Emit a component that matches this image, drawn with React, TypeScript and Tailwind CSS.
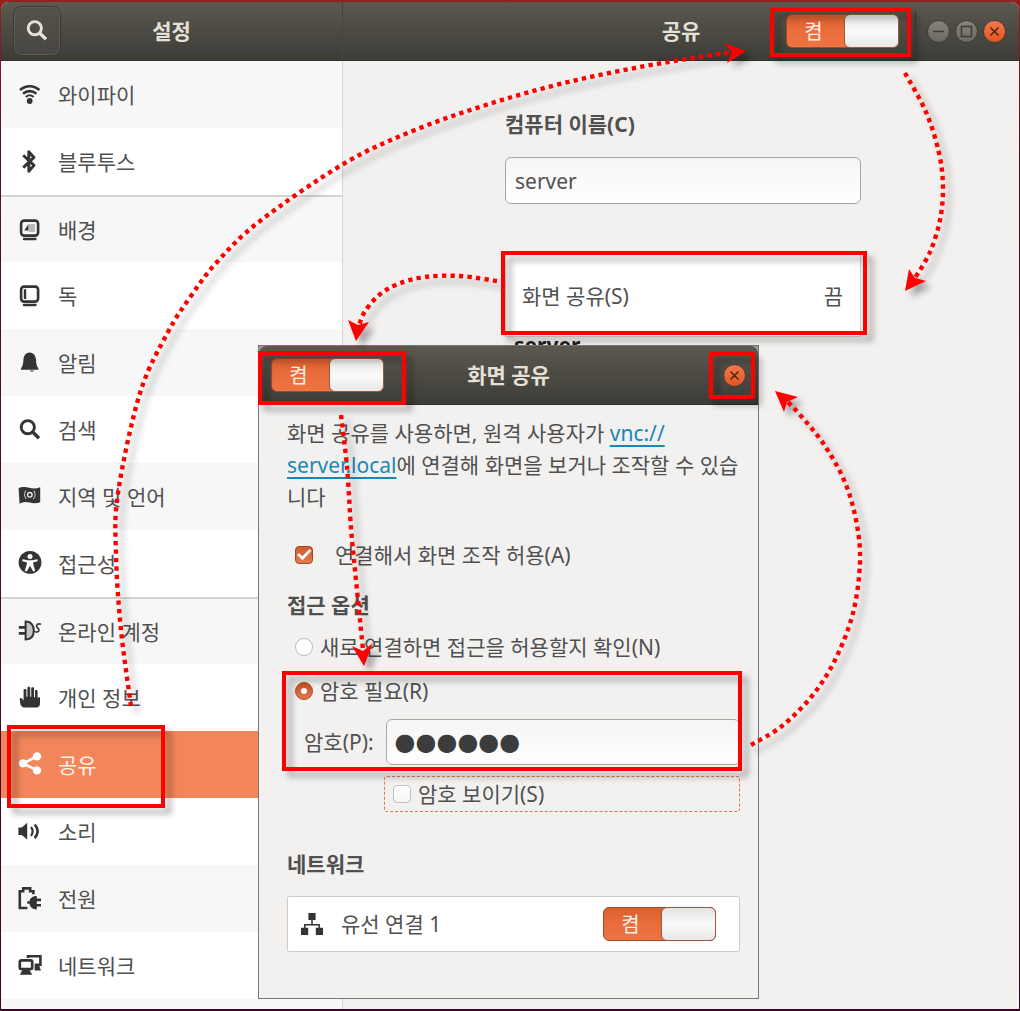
import React, { useState } from "react";

type Point = [number, number];

/* ---------- icons (22 x 22 grid) ---------- */

function Icon({ children, className = "" }: { children: React.ReactNode; className?: string }) {
  return (
    <svg
      viewBox="0 0 22 22"
      className={`size-[22px] shrink-0 overflow-visible ${className}`}
      fill="none"
      stroke="none"
      aria-hidden="true"
    >
      {children}
    </svg>
  );
}

const WifiIcon = (
  <Icon>
    <circle cx="10.7" cy="17" r="2.9" fill="currentColor" />
    <g stroke="currentColor" strokeWidth="2.6">
      <path d="M1 6C6.8 .9 14.6 .9 20.4 6" />
      <path d="M4 9.7C8 6.2 13.4 6.2 17.4 9.7" />
      <path d="M6.8 13C9.2 10.9 12.2 10.9 14.6 13" strokeWidth="2" />
    </g>
  </Icon>
);

const BluetoothIcon = (
  <Icon>
    <path d="M4.2 4.2L15 14.4L9.8 20.2V.8L15 6.4L4.2 16.6" stroke="currentColor" strokeWidth="2.9" strokeLinejoin="round" />
  </Icon>
);

const BackgroundIcon = (
  <Icon>
    <rect x="2.1" y="1.6" width="17" height="15" rx="3" stroke="currentColor" strokeWidth="2.6" />
    <path d="M5 20H16.4" stroke="currentColor" strokeWidth="2.4" strokeLinecap="round" />
    <rect x="9.5" y="5" width="6.5" height="8" fill="#b9b9b9" />
    <path d="M5.2 11.4L9.4 5.2V11.4Z" fill="currentColor" />
  </Icon>
);

const DockIcon = (
  <Icon>
    <rect x="2.1" y="1.6" width="17" height="15" rx="3" stroke="currentColor" strokeWidth="2.6" />
    <path d="M5 20H16.4" stroke="currentColor" strokeWidth="2.4" strokeLinecap="round" />
    <path d="M6 4.2V14" stroke="currentColor" strokeWidth="2.4" />
  </Icon>
);

const BellIcon = (
  <Icon>
    <path
      d="M10.7 .4C6.4 .4 4.6 4.2 4.4 7.8C4.2 12.2 3.6 14.4 2 16.2V17.8H19.4V16.2C17.8 14.4 17.2 12.2 17 7.8C16.8 4.2 15 .4 10.7 .4Z"
      fill="currentColor"
    />
    <path d="M10.8 18.6H15C14.6 20 11.4 20 10.8 18.6Z" fill="currentColor" />
  </Icon>
);

const SearchIcon = (
  <Icon>
    <circle cx="8.8" cy="8.2" r="6.6" stroke="currentColor" strokeWidth="2.9" />
    <path d="M13.4 12.8L20 19.2" stroke="currentColor" strokeWidth="3.4" />
  </Icon>
);

const FlagIcon = (
  <Icon>
    <path d="M-.4 2.2C4 .2 7.6 1.2 11 2C14.6 2.8 18 2.4 21.2 1.2V16.2C17.4 17.8 13.6 17.4 10.4 16.6C6.8 15.8 4 15.8.6 17.8Z" fill="currentColor" />
    <circle cx="10.8" cy="8.8" r="2.3" stroke="#e8e8e8" strokeWidth="1.4" />
    <path d="M6.8 4.7C4.8 7.3 5 10.9 7.4 13M14.8 4.7C16.8 7.3 16.6 10.9 14.2 13" stroke="#bdbdbd" strokeWidth="1.1" />
  </Icon>
);

const AccessIcon = (
  <Icon>
    <circle cx="11" cy="9.4" r="11.4" fill="currentColor" />
    <circle cx="11" cy="3.4" r="2.5" fill="#fff" />
    <path d="M3.4 6.2L9 7.2H13L18.6 6.2V8.2L14 9.6L14.4 11.8L16.2 17.8L14.2 18.4L11 12.8L7.8 18.4L5.8 17.8L7.6 11.8L8 9.6L3.4 8.2Z" fill="#fff" />
  </Icon>
);

const AccountsIcon = (
  <Icon>
    <path d="M-.2 6.4H6M-.2 12.4H6" stroke="currentColor" strokeWidth="2.6" />
    <path d="M6.6 .6V18.4C12.6 18.4 14.8 14.2 14.8 9.5C14.8 4.8 12.6 .6 6.6 .6Z" fill="#c4c4c4" stroke="currentColor" strokeWidth="2" />
    <path d="M15 10.4C18 11.8 20.8 10.4 19.8 8.4C18.8 6.6 17 6 17.6 4.2C18.2 2.8 20.4 2.8 22 3.2" stroke="currentColor" strokeWidth="1.6" />
  </Icon>
);

const HandIcon = (
  <Icon>
    <path
      d="M.8 12.2C.8 10.6 2.6 10.6 3.2 11.8L4.6 13.6V3C4.6 1.6 7.4 1.6 7.4 3V9.8H8.4V1C8.4-.6 11.2-.6 11.2 1V9.8H12.2V1.4C12.2 0 15 0 15 1.4V10.2H16V4C16 2.6 18.6 2.6 18.6 4V10.4L21 10.2V16.2C21 19.2 19.4 20.6 16.6 20.6H6.6C3.6 20.6 1.6 19 1.2 16.4Z"
      fill="currentColor"
    />
  </Icon>
);

const ShareIcon = (
  <Icon>
    <path d="M18 2.4L4 9.4L18 16.4" stroke="currentColor" strokeWidth="2.6" />
    <circle cx="18" cy="2.4" r="4.2" fill="currentColor" />
    <circle cx="4" cy="9.4" r="4.2" fill="currentColor" />
    <circle cx="18" cy="16.4" r="4.2" fill="currentColor" />
  </Icon>
);

const SoundIcon = (
  <Icon>
    <path d="M-.6 6.4H2.8L8.2 1.8V18.6L2.8 14H-.6Z" fill="currentColor" />
    <path d="M12 6C14 8.6 14 12.2 12 14.8" stroke="currentColor" strokeWidth="2.2" />
    <path d="M15.6 3.6C19.6 7.4 19.6 13 15.6 17" stroke="currentColor" strokeWidth="2.6" />
  </Icon>
);

const PowerIcon = (
  <Icon>
    <path d="M8.4 20H.8V3.2H4.2V.4H11.2V3.2H14.4V6.2" stroke="currentColor" strokeWidth="2.6" />
    <path d="M8.2 13.2H10.6C11 10.2 13.4 8 17.8 8V10.6H22V13.2H17.8V16H22V18.6H17.8V21.4C13.4 21.4 11 19.2 10.6 15.8H8.2Z" fill="currentColor" />
  </Icon>
);

const NetworkIcon = (
  <Icon>
    <rect x=".8" y="5.4" width="12.4" height="8.6" rx="1.6" stroke="currentColor" strokeWidth="2.7" />
    <path d="M3.6 14.6H10.4L13.2 19.8H.8Z" fill="currentColor" />
    <path d="M9 3V1.2H21.4V9.8H16" stroke="currentColor" strokeWidth="2.6" />
    <path d="M15.6 9H19.6L22 15.4H15.6Z" fill="currentColor" />
  </Icon>
);

const WiredIcon = (
  <Icon>
    <path d="M11 6V12M3.8 16V11.8H18.2V16" stroke="currentColor" strokeWidth="1.5" />
    <path d="M7.4 0H14.6V7H7.4ZM0 14.8H7.2V22H0ZM14.8 14.8H22V22H14.8Z" fill="currentColor" />
  </Icon>
);

/* ---------- sidebar data ---------- */

const groups: { label: string; icon: React.ReactNode }[][] = [
  [
    { label: "와이파이", icon: WifiIcon },
    { label: "블루투스", icon: BluetoothIcon },
  ],
  [
    { label: "배경", icon: BackgroundIcon },
    { label: "독", icon: DockIcon },
    { label: "알림", icon: BellIcon },
    { label: "검색", icon: SearchIcon },
    { label: "지역 및 언어", icon: FlagIcon },
    { label: "접근성", icon: AccessIcon },
  ],
  [
    { label: "온라인 계정", icon: AccountsIcon },
    { label: "개인 정보", icon: HandIcon },
    { label: "공유", icon: ShareIcon },
    { label: "소리", icon: SoundIcon },
    { label: "전원", icon: PowerIcon },
    { label: "네트워크", icon: NetworkIcon },
  ],
];

/* ---------- controls ---------- */

function Switch({ label }: { label: string }) {
  const [on, setOn] = useState(true);
  return (
    <button
      type="button"
      role="switch"
      aria-checked={on}
      aria-label={label}
      onClick={() => setOn(!on)}
      className={`flex h-[34px] w-[113px] items-stretch rounded-md border border-[#a04a26] bg-linear-to-b from-[#d9602f] via-[#ea6d3c] to-[#ee7442] text-[20px] leading-[34px] text-[#fdeee6] ${on ? "" : "flex-row-reverse"}`}
    >
      <span className="flex-1 pr-1 text-center">켬</span>
      <span className="-my-px -mr-px w-[55px] rounded-md border border-[#9c5a3c] bg-linear-to-b from-[#e4e4e4] via-[#fafafa] to-[#e9e8e7]" />
    </button>
  );
}

function WindowButton({ kind }: { kind: "minimize" | "maximize" | "close" }) {
  const close = kind === "close";
  return (
    <button
      type="button"
      aria-label={kind}
      className={`size-[23px] shrink-0 rounded-full border ${
        close
          ? "border-[#4a3a30] bg-linear-to-b from-[#f4794c] to-[#e2541f] text-[#4a2412]"
          : "border-[#3b3a35] bg-linear-to-b from-[#85837b] to-[#6b6962] text-[#3b3a36]"
      }`}
    >
      <svg viewBox="0 0 21 21" className="size-[21px]" fill="none" stroke="currentColor" strokeWidth="1.5" aria-hidden="true">
        {kind === "minimize" && <path d="M5 10.5H16" />}
        {kind === "maximize" && <rect x="5.5" y="5.5" width="10" height="10" />}
        {close && <path d="M6.5 6.5L14.5 14.5M14.5 6.5L6.5 14.5" />}
      </svg>
    </button>
  );
}

function Tick({ id, checked = false }: { id: string; checked?: boolean }) {
  return (
    <span className="relative size-[18px] shrink-0">
      <input
        id={id}
        type="checkbox"
        defaultChecked={checked}
        className="peer block size-[18px] appearance-none rounded-[4px] border border-[#c4c2bf] bg-linear-to-b from-white to-[#f6f5f4] checked:border-[#a4481f] checked:from-[#cf5a2b] checked:to-[#e27a50]"
      />
      <svg
        viewBox="0 0 18 18"
        className="pointer-events-none absolute inset-0 hidden size-[18px] peer-checked:block"
        fill="none"
        stroke="#fff"
        strokeWidth="2.8"
        aria-hidden="true"
      >
        <path d="M3 8L7.4 12.2L15.4 4" />
      </svg>
    </span>
  );
}

function Radio({ id, checked = false }: { id: string; checked?: boolean }) {
  return (
    <span className="relative size-[18px] shrink-0">
      <input
        id={id}
        type="radio"
        name="access"
        defaultChecked={checked}
        className="peer block size-[18px] appearance-none rounded-full border border-[#bdbbb8] bg-white checked:border-[#a4481f] checked:bg-linear-to-b checked:from-[#c04f22] checked:to-[#e27a50]"
      />
      <span className="pointer-events-none absolute inset-[6px] hidden rounded-full bg-white peer-checked:block" />
    </span>
  );
}

/* ---------- annotations ---------- */

function spline(points: Point[]) {
  let d = `M${points[0][0]} ${points[0][1]}`;
  for (let i = 0; i < points.length - 1; i++) {
    const p0 = points[Math.max(i - 1, 0)];
    const p1 = points[i];
    const p2 = points[i + 1];
    const p3 = points[Math.min(i + 2, points.length - 1)];
    d += `C${p1[0] + (p2[0] - p0[0]) / 6} ${p1[1] + (p2[1] - p0[1]) / 6} ${p2[0] - (p3[0] - p1[0]) / 6} ${p2[1] - (p3[1] - p1[1]) / 6} ${p2[0]} ${p2[1]}`;
  }
  return d;
}

const arrows: { line: Point[]; head: string }[] = [
  {
    line: [[131, 706], [121, 630], [116, 555], [118, 493], [140, 393], [168, 332], [191, 296], [217, 262], [260, 221], [345, 163], [415, 130], [486, 105], [560, 84], [640, 67], [731, 52]],
    head: "M746 51L724 43L732 52L727 63Z",
  },
  {
    line: [[905, 73], [926, 112], [939, 153], [943, 187], [940, 220], [930, 252], [915, 278]],
    head: "M905 291L909 269L915 278L926 281Z",
  },
  {
    line: [[751, 745], [782, 726], [812, 696], [835, 660], [853, 613], [860, 562], [856, 520], [844, 480], [823, 443], [801, 416], [787, 401]],
    head: "M775 391L798 397L787 402L784 412Z",
  },
  {
    line: [[497, 281], [460, 276], [425, 277], [398, 284], [378, 296], [364, 313], [359, 326]],
    head: "M356 341L348 320L358 325L369 322Z",
  },
  {
    line: [[341, 415], [347, 467], [351, 528], [355, 570], [360, 620], [363, 650]],
    head: "M364 666L352 646L363 651L373 643Z",
  },
];

const boxes = [
  [770, 8, 141, 49],
  [501, 251, 366, 84],
  [258, 351, 148, 54],
  [709, 352, 46, 47],
  [282, 671, 460, 100],
  [7, 725, 158, 83],
];

function Annotations() {
  return (
    <svg
      viewBox="0 0 1020 1011"
      className="pointer-events-none absolute top-0 left-0 h-[1011px] w-[1020px] drop-shadow-[6px_6px_3px_rgba(0,0,0,0.32)]"
      fill="none"
      stroke="#f00"
      aria-hidden="true"
    >
      {boxes.map(([x, y, w, h]) => (
        <rect key={`${x}-${y}`} x={x + 2} y={y + 2} width={w - 4} height={h - 4} strokeWidth="4" />
      ))}
      {arrows.map((a) => (
        <g key={a.head}>
          <path d={spline(a.line)} strokeWidth="4.4" strokeDasharray="4.3 4.2" />
          <path d={a.head} fill="#f00" stroke="none" />
        </g>
      ))}
    </svg>
  );
}

/* ---------- dialog ---------- */

function SharingDialog() {
  return (
    <section
      role="dialog"
      aria-label="화면 공유"
      className="absolute top-[345px] left-[258px] w-[501px] border border-[#777774] bg-[#f2f1ef]"
    >
      <div className="bg-[#9b9b98]">
        <header className="grid h-[59px] grid-cols-[1fr_auto_1fr] items-center rounded-t-lg border-b border-[#2f2e2a] bg-linear-to-b from-[#5b594f] to-[#3d3c37] px-3">
          <Switch label="화면 공유" />
          <h2 className="font-bold text-[#e5e1d8]">화면 공유</h2>
          <div className="flex justify-end">
            <WindowButton kind="close" />
          </div>
        </header>
      </div>

      <div className="flex flex-col pt-3 pr-[18px] pb-[46px] pl-7">
        <p className="leading-[32px] whitespace-nowrap">
          화면 공유를 사용하면, 원격 사용자가{" "}
          <a href="#vnc" className="text-[#1b87b5] underline decoration-2 underline-offset-4">
            vnc://
            <br />
            server.local
          </a>
          에 연결해 화면을 보거나 조작할 수 있습
          <br />
          니다
        </p>

        <div className="mt-7 flex h-7 items-center gap-[22px] pl-2">
          <Tick id="control" checked />
          <label htmlFor="control">연결해서 화면 조작 허용(A)</label>
        </div>

        <h3 className="mt-[22px] h-7 leading-7 font-bold">접근 옵션</h3>

        <div className="mt-[14px] flex h-7 items-center gap-[7px] pl-2">
          <Radio id="ask" />
          <label htmlFor="ask">새로 연결하면 접근을 허용할지 확인(N)</label>
        </div>
        <div className="mt-4 flex h-7 items-center gap-[7px] pl-2">
          <Radio id="need" checked />
          <label htmlFor="need">암호 필요(R)</label>
        </div>

        <div className="mt-[14px] flex items-center gap-3 pl-[17px]">
          <label htmlFor="password" className="shrink-0">
            암호(P):
          </label>
          <input
            id="password"
            defaultValue="●●●●●●"
            autoComplete="off"
            className="h-[46px] min-w-0 flex-1 rounded-md border border-[#a8a7a4] bg-linear-to-b from-[#f5f5f5] to-white px-2 font-['DejaVu_Sans',sans-serif] text-[24px] text-[#3c3c3c] outline-none"
          />
        </div>

        <div className="mt-[11px] ml-[97px] flex h-9 items-center gap-[7px] rounded-[3px] border border-dashed border-[#e5754a] pl-2">
          <Tick id="show" />
          <label htmlFor="show">암호 보이기(S)</label>
        </div>

        <h3 className="mt-[38px] h-7 leading-7 font-bold">네트워크</h3>

        <div className="mt-[18px] flex h-14 items-center rounded-[2px] border border-[#cfccc8] bg-white pr-[23px] pl-[13px]">
          <span className="text-[#343434]">{WiredIcon}</span>
          <span className="ml-[18px] flex-1">유선 연결 1</span>
          <Switch label="유선 연결 1" />
        </div>
      </div>
    </section>
  );
}

/* ---------- window ---------- */

export default function App() {
  return (
    <div className="relative h-screen overflow-hidden bg-linear-to-b from-[#94211f] via-[#5a0d20] via-15% to-[#3d0620] px-px pt-[2px] pb-[2px] font-['Noto_Sans','Noto_Sans_CJK_KR',sans-serif] text-[21px] leading-7 text-[#505050]">
      <div className="flex h-full flex-col overflow-hidden rounded-t-lg bg-[#f2f1ef]">
        <header className="flex h-[59px] shrink-0 border-b border-[#33322e] bg-linear-to-b from-[#5b594f] to-[#3d3c37] text-[#e5e1d8]">
          <div className="grid w-[342px] shrink-0 grid-cols-[1fr_auto_1fr] items-center border-r border-[#45443e] pl-3">
            <button
              type="button"
              aria-label="검색"
              className="flex h-[50px] w-[48px] items-center justify-center rounded-lg border border-[#3b3a35] bg-[#504e47]/50 shadow-[inset_0_0_0_1px_#5d5b53]"
            >
              {SearchIcon}
            </button>
            <h1 className="pr-3 font-bold">설정</h1>
          </div>
          <div className="grid flex-1 grid-cols-[1fr_auto_1fr] items-center">
            <span />
            <h2 className="font-bold">공유</h2>
            <div className="flex items-center justify-end pr-[13px]">
              <Switch label="공유" />
              <span className="mr-[11px] ml-4 h-10 w-px bg-[#3d3c37]" />
              <div className="flex gap-[5px]">
                <WindowButton kind="minimize" />
                <WindowButton kind="maximize" />
                <WindowButton kind="close" />
              </div>
            </div>
          </div>
        </header>

        <div className="flex min-h-0 flex-1">
          <nav className="w-[342px] shrink-0 overflow-hidden border-r border-[#d9d6d2] bg-white">
            {groups.map((group, g) => (
              <ul key={g}>
                {group.map((item, i) => {
                  const active = item.label === "공유";
                  const tone = active
                    ? "bg-[#f28559] text-white"
                    : i % 2 === 0
                      ? "bg-[#f7f7f7] text-[#343434]"
                      : "bg-white text-[#343434]";
                  return (
                    <li key={item.label} className={g > 0 && i === 0 ? "border-t-2 border-[#d6d2cd]" : ""}>
                      <a
                        href={`#${g}-${i}`}
                        aria-current={active ? "page" : undefined}
                        className={`flex items-center gap-[17px] pl-[18px] ${g > 0 && i === 0 ? "h-[65px]" : "h-[67px]"} ${tone}`}
                      >
                        {item.icon}
                        <span className={active ? "text-[#fdf0ea]" : "text-[#505050]"}>{item.label}</span>
                      </a>
                    </li>
                  );
                })}
              </ul>
            ))}
            <div className="h-[67px] bg-[#f7f7f7]" />
          </nav>

          <main className="min-w-0 flex-1 pt-[49px] pl-1">
            <div className="mx-auto flex w-[356px] flex-col">
              <label htmlFor="computer" className="font-bold">
                컴퓨터 이름(C)
              </label>
              <input
                id="computer"
                defaultValue="server"
                className="mt-[19px] h-[47px] rounded-md border border-[#a8a7a4] bg-linear-to-b from-[#f5f5f5] to-white px-[9px] outline-none"
              />
              <button
                type="button"
                className="mt-[50px] flex h-[83px] items-center justify-between border border-[#cfccc8] bg-white pr-[17px] pl-4"
              >
                <span>화면 공유(S)</span>
                <span>끔</span>
              </button>
              <span className="pl-[9px] leading-4 font-bold text-[#222]">server</span>
            </div>
          </main>
        </div>
      </div>

      <SharingDialog />
      <Annotations />
    </div>
  );
}
